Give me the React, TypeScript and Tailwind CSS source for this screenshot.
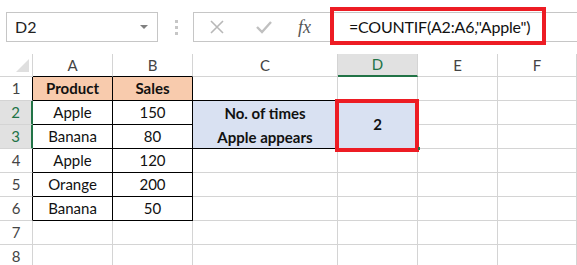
import type { ReactNode } from 'react';

const GRID = 'border-[#d4d4d4]';

type CellProps = {
  children?: ReactNode;
  className?: string;
};

function Cell({ children, className = '' }: CellProps) {
  return (
    <div
      className={`flex items-center justify-center border-r border-b ${className}`}
    >
      {children}
    </div>
  );
}

const cols = ['A', 'B', 'C', 'D', 'E', 'F'];

export default function App() {
  return (
    <div className="h-[265px] w-[577px] overflow-hidden bg-white font-['Lato','Open_Sans',sans-serif] text-[15px] text-black">
      {/* formula bar */}
      <div className="flex h-[54px] items-start pt-[12px]">
        <div className="ml-[6px] flex h-[30px] w-[152px] items-center justify-between border border-[#c6c6c6] pr-[9px] pl-[8px]">
          <span className="text-[16px] text-[#222]">D2</span>
          <span className="h-0 w-0 border-x-[4px] border-t-[4px] border-x-transparent border-t-[#808080]" />
        </div>
        <div className="ml-[17px] flex h-[30px] flex-col items-center justify-center gap-[3px]">
          <span className="h-[3px] w-[3px] bg-[#c6c6c6]" />
          <span className="h-[3px] w-[3px] bg-[#c6c6c6]" />
          <span className="h-[3px] w-[3px] bg-[#c6c6c6]" />
        </div>
        <div className="ml-[15px] flex h-[30px] w-[137px] items-center border border-r-0 border-[#c6c6c6]">
          <svg width="14" height="14" viewBox="0 0 14 14" className="ml-[16px]">
            <path d="M1 1 L13 13 M13 1 L1 13" stroke="#b8b8b8" strokeWidth="1.6" />
          </svg>
          <svg width="16" height="14" viewBox="0 0 16 14" className="ml-[32px]">
            <path d="M1 7 L6 12 L15 2" stroke="#c0c0c0" strokeWidth="2.4" fill="none" />
          </svg>
          <span className="ml-[26px] font-['Liberation_Serif',serif] text-[18px] italic text-[#555]">
            fx
          </span>
        </div>
        <div className="relative flex h-[30px] flex-1 items-center border-y border-[#c6c6c6]">
          <div className="absolute top-[-6px] left-0 h-[38px] w-[216px] border-[4px] border-[#ed1c24]" />
          <span className="ml-[19px] text-[16px] tracking-[-0.2px] text-[#111]">=COUNTIF(A2:A6,"Apple")</span>
        </div>
      </div>

      {/* sheet grid */}
      <div className="grid grid-cols-[33px_80px_80px_145px_80px_80px_1fr] grid-rows-[23px_repeat(8,24px)] text-[#111]">
        {/* header row */}
        <div className={`relative border-r border-b ${GRID}`}>
          <div className="absolute right-[3px] bottom-[4px] h-0 w-0 border-b-[13px] border-l-[13px] border-b-[#dfdfdf] border-l-transparent" />
        </div>
        {cols.map((c) => (
          <Cell
            key={c}
            className={
              c === 'D'
                ? 'border-r-[#d4d4d4] border-b-2 border-b-[#217346] bg-[#e1e1e1] text-[#217346]'
                : c === 'A' || c === 'B'
                  ? 'border-r-[#d4d4d4] border-b-black text-[#444]'
                  : `${GRID} text-[#444]`
            }
          >
            {c}
          </Cell>
        ))}

        {/* row 1 */}
        <Cell className="border-r-black border-b-[#d4d4d4] text-[#444]">1</Cell>
        <Cell className="border-black bg-[#f8cbad] font-bold">Product</Cell>
        <Cell className="border-black bg-[#f8cbad] font-bold">Sales</Cell>
        <Cell className="border-r-[#d4d4d4] border-b-black" />
        <Cell className={GRID} />
        <Cell className={GRID} />
        <Cell className={GRID} />

        {/* rows 2-3 */}
        <Cell className="border-r-2 border-r-[#217346] border-b-[#d4d4d4] bg-[#e1e1e1] text-[#217346]">2</Cell>
        <Cell className="border-black">Apple</Cell>
        <Cell className="border-black">150</Cell>
        <div className="row-span-2 flex flex-col items-center justify-center border-r border-b border-black bg-[#d9e1f2] leading-[24px] font-bold">
          <span>No. of times</span>
          <span>Apple appears</span>
        </div>
        <div className="relative row-span-2 flex items-center justify-center border-r border-b border-[#d4d4d4] bg-[#d9e1f2] font-bold">
          2
          <div className="absolute top-[-2px] right-[-2px] bottom-[-4px] left-[-3px] border-[4px] border-[#ed1c24]" />
          <div className="absolute right-[-3px] bottom-[-2px] h-[3px] w-[2px] bg-[#217346]" />
        </div>
        <Cell className={GRID} />
        <Cell className={GRID} />

        <Cell className="border-r-2 border-r-[#217346] border-b-[#d4d4d4] bg-[#e1e1e1] text-[#217346]">3</Cell>
        <Cell className="border-black">Banana</Cell>
        <Cell className="border-black">80</Cell>
        <Cell className={GRID} />
        <Cell className={GRID} />

        {/* rows 4-6 */}
        {[
          ['4', 'Apple', '120'],
          ['5', 'Orange', '200'],
          ['6', 'Banana', '50'],
        ].map(([n, p, s]) => (
          <RowData key={n} n={n} p={p} s={s} />
        ))}

        {/* empty rows */}
        {['7', '8'].map((n) => (
          <EmptyRow key={n} n={n} />
        ))}
      </div>
    </div>
  );
}

function RowData({ n, p, s }: { n: string; p: string; s: string }) {
  return (
    <>
      <Cell className="border-r-black border-b-[#d4d4d4] text-[#444]">{n}</Cell>
      <Cell className="border-black">{p}</Cell>
      <Cell className="border-black">{s}</Cell>
      <Cell className={GRID} />
      <Cell className={GRID} />
      <Cell className={GRID} />
      <Cell className={GRID} />
    </>
  );
}

function EmptyRow({ n }: { n: string }) {
  return (
    <>
      <Cell className={`${GRID} text-[#444]`}>{n}</Cell>
      <Cell className={GRID} />
      <Cell className={GRID} />
      <Cell className={GRID} />
      <Cell className={GRID} />
      <Cell className={GRID} />
      <Cell className={GRID} />
    </>
  );
}
